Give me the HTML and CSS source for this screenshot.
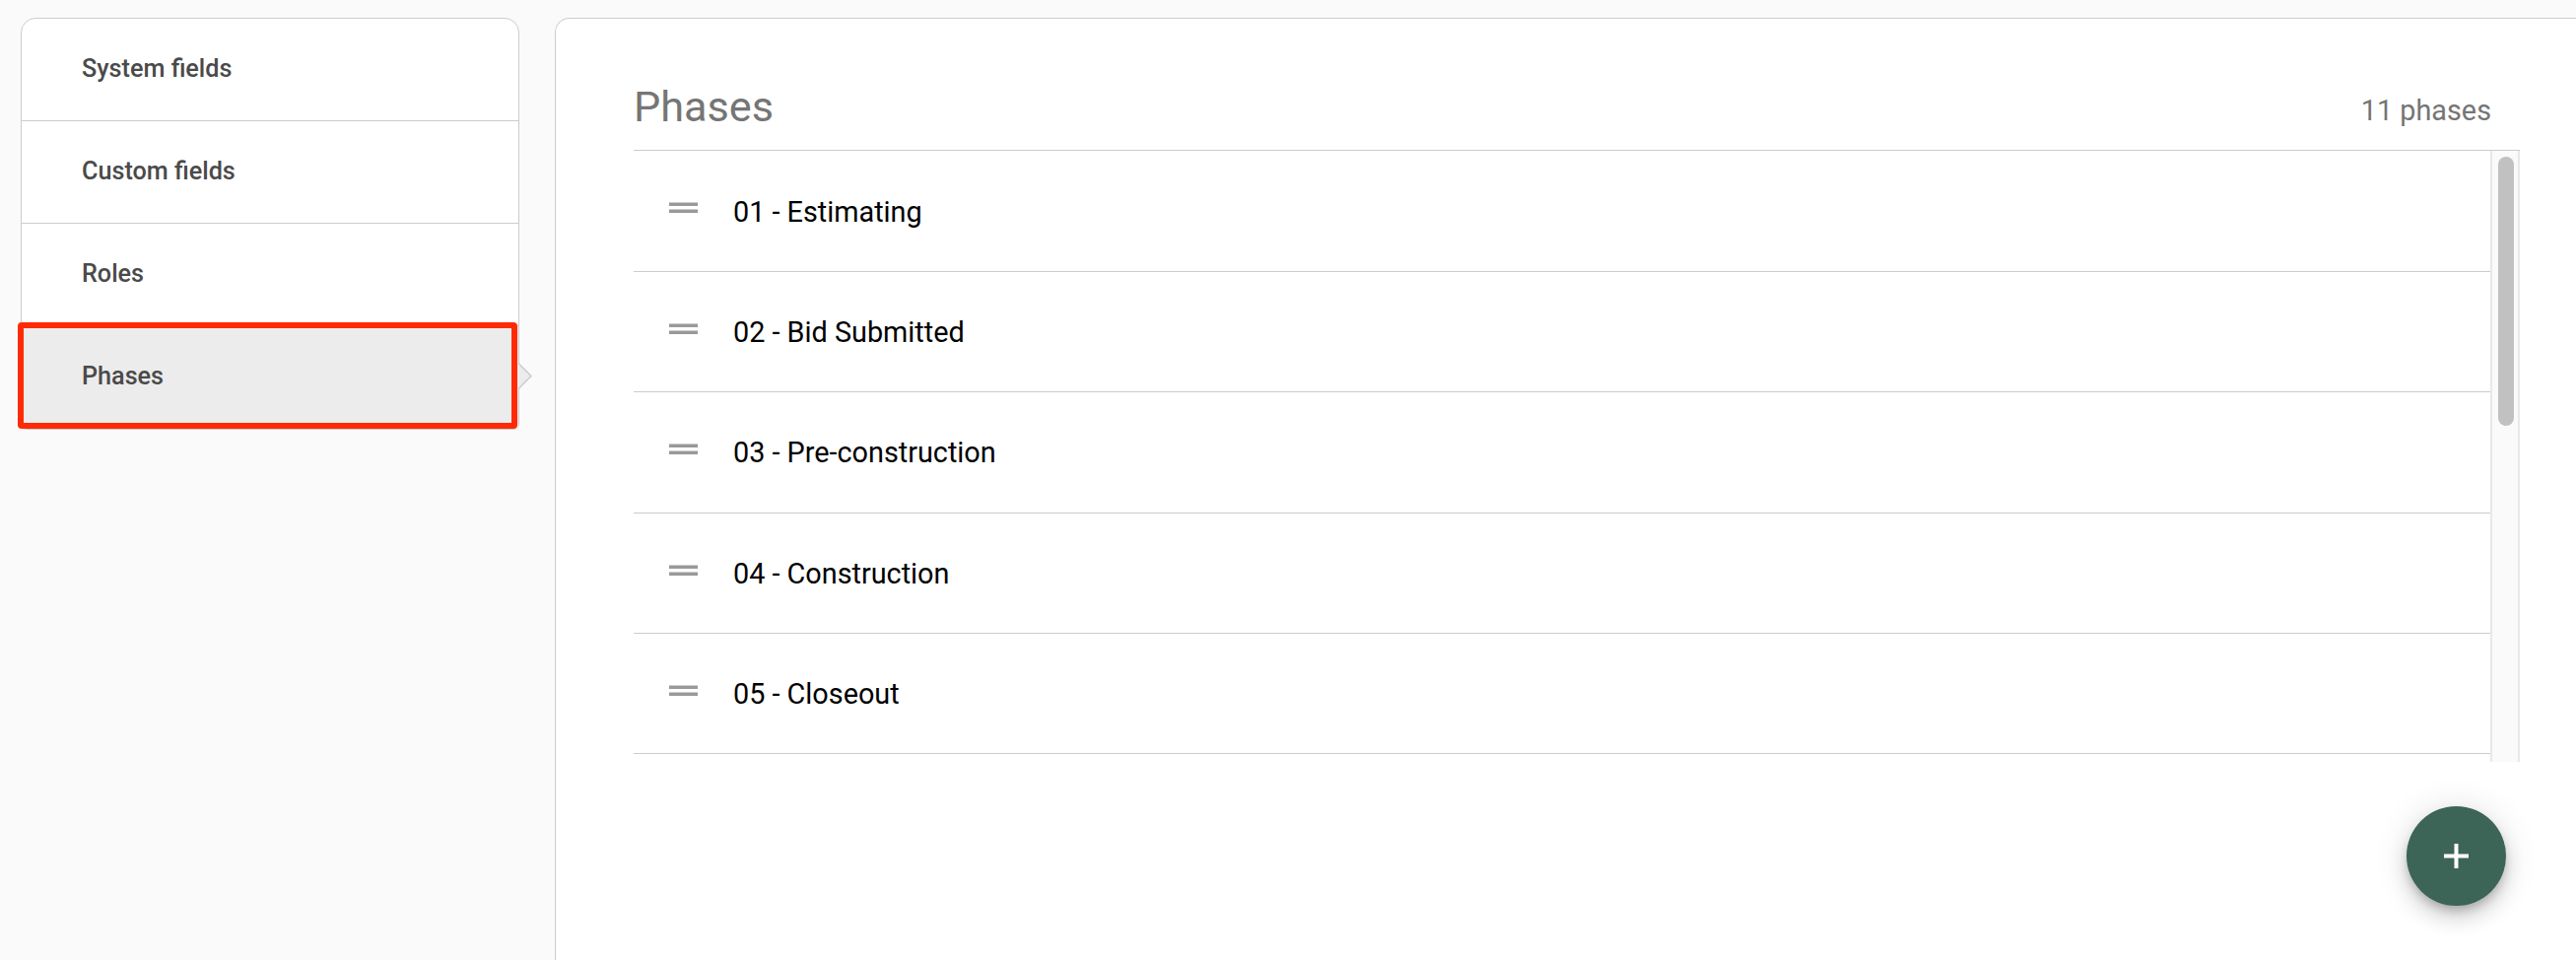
FILE: index.html
```html
<!DOCTYPE html>
<html lang="en">
<head>
<meta charset="utf-8">
<title>Phases</title>
<link rel="stylesheet" href="styles.css">
</head>
<body>
<svg width="0" height="0" class="defs"><symbol id="drag" viewBox="0 0 29 11"><path d="M0 .5h29V4H0zM0 7.5h29V11H0z" fill="#999"/></symbol></svg>
<div class="page">
  <nav class="sidebar">
    <a class="item">System fields</a>
    <a class="item">Custom fields</a>
    <a class="item">Roles</a>
    <a class="item active">Phases<svg class="arrow" width="16" height="30" viewBox="0 0 16 30"><path d="M0 1.5 13 14.5 0 27.5" fill="#ececec" stroke="#ccc" stroke-width="1.5"/></svg><span class="highlight"></span></a>
  </nav>
  <main class="panel">
    <header class="head">
      <h1 class="title">Phases</h1>
      <span class="count">11 phases</span>
    </header>
    <div class="scroller">
      <ul class="list">
        <li class="row"><svg class="handle"><use href="#drag"/></svg><span class="name">01 - Estimating</span></li>
        <li class="row"><svg class="handle"><use href="#drag"/></svg><span class="name">02 - Bid Submitted</span></li>
        <li class="row"><svg class="handle"><use href="#drag"/></svg><span class="name">03 - Pre-construction</span></li>
        <li class="row"><svg class="handle"><use href="#drag"/></svg><span class="name">04 - Construction</span></li>
        <li class="row"><svg class="handle"><use href="#drag"/></svg><span class="name">05 - Closeout</span></li>
      </ul>
      <div class="track"><div class="thumb"></div></div>
    </div>
    <button class="fab" aria-label="Add phase"><svg width="25" height="25" viewBox="0 0 25 25"><path d="M10.5 0h4v10.5H25v4H14.5V25h-4V14.5H0v-4h10.5z" fill="#fff"/></svg></button>
  </main>
</div>
</body>
</html>
```
FILE: styles.css
```css
* { box-sizing: border-box; }
body {
  margin: 0;
  background: #fafafa;
  font-family: Roboto, "Liberation Sans", sans-serif;
}
.defs { display: none; }
.page {
  display: flex;
  align-items: flex-start;
  gap: 36px;
  height: 974px;
  padding: 18px 0 0 21px;
  overflow: hidden;
}
.sidebar {
  flex: none;
  width: 506px;
  border: 1px solid #ccc;
  border-radius: 15px 15px 6px 6px;
  background: #fff;
}
.item {
  position: relative;
  display: flex;
  align-items: center;
  height: 104px;
  padding: 0 0 3px 61px;
  border-bottom: 1px solid #ccc;
  color: #4a4a4a;
  font-size: 25.2px;
  font-weight: 500;
}
.item.active {
  border-bottom: 0;
  background: #ececec;
}
.arrow {
  position: absolute;
  left: 504px;
  top: 36px;
}
.highlight {
  position: absolute;
  left: -4px;
  top: -4px;
  width: 507px;
  height: 108px;
  border: 6px solid #ff2b06;
  border-radius: 4px;
}
.panel {
  flex: 1;
  height: 970px;
  padding: 0 57px 0 79px;
  border: 1px solid #ccc;
  border-right: 0;
  border-radius: 15px 0 0 0;
  background: #fff;
}
.head {
  display: flex;
  justify-content: space-between;
  align-items: flex-start;
  height: 134px;
  padding: 64px 29px 0 0;
  border-bottom: 1px solid #ccc;
  color: #757575;
}
.title {
  margin: 0;
  font-size: 43.2px;
  font-weight: 400;
  line-height: 52px;
}
.count {
  padding-top: 12px;
  font-size: 28.8px;
  line-height: 34px;
}
.scroller {
  display: flex;
  height: 620px;
}
.list {
  flex: 1;
  margin: 0;
  padding: 0;
  list-style: none;
}
.row {
  display: flex;
  align-items: flex-start;
  gap: 36px;
  height: 122px;
  padding: 44px 0 0 36px;
  border-bottom: 1px solid #ccc;
  color: #000;
  font-size: 28.8px;
  line-height: 34px;
}
.row:nth-child(1),
.row:nth-child(3) { height: 123px; }
.row:first-child .name { padding-top: 1px; }
.handle {
  width: 29px;
  height: 11px;
  margin-top: 8px;
}
.track {
  width: 30px;
  padding: 6px 6px 0;
  border: solid #e8e8e8;
  border-width: 0 2px;
  background: #fafafa;
}
.thumb {
  width: 16px;
  height: 273px;
  border-radius: 8px;
  background: #c1c1c1;
}
.fab {
  display: flex;
  align-items: center;
  justify-content: center;
  width: 101px;
  height: 101px;
  margin: 45px 14px 0 auto;
  padding: 0;
  border: 0;
  border-radius: 50%;
  background: #3c6457;
  box-shadow: 0 6px 10px -2px rgba(0,0,0,.2), 0 12px 20px rgba(0,0,0,.14), 0 2px 36px rgba(0,0,0,.12);
}
```
